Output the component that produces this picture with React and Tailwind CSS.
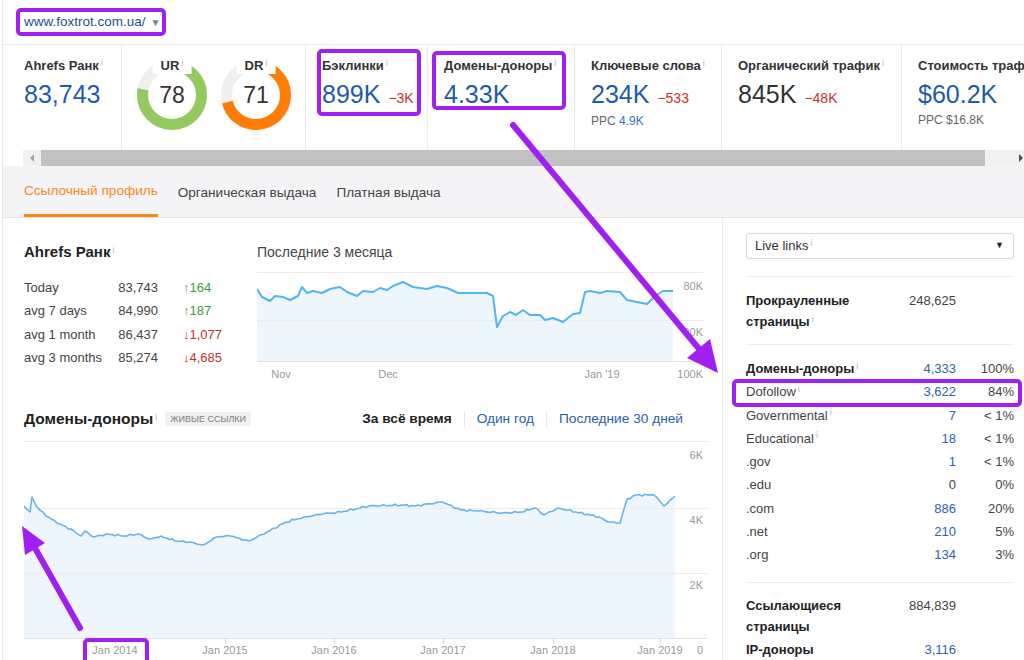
import React from 'react'

const PURPLE = '#a11ff0'

function I() {
  return <sup className="ml-[2px] text-[9px] font-normal text-[#b4b4b4]">i</sup>
}

function Donut({ label, value, pct, color }) {
  const r = 29.5
  const c = 2 * Math.PI * r
  return (
    <div className="relative h-[70px] w-[70px]">
      <svg width="70" height="70" viewBox="0 0 70 70">
        <circle cx="35" cy="35" r={r} fill="none" stroke="#efefef" strokeWidth="11" />
        <circle
          cx="35"
          cy="35"
          r={r}
          fill="none"
          stroke={color}
          strokeWidth="11"
          strokeDasharray={`${pct * c} ${c}`}
          transform="rotate(-90 35 35)"
        />
      </svg>
      <div className="absolute left-1/2 top-[-2px] -translate-x-1/2 whitespace-nowrap bg-white px-2 text-[13px] font-bold leading-4 text-[#333]">
        {label}
        <I />
      </div>
      <div className="absolute inset-0 flex items-center justify-center text-[23px] text-[#333]">{value}</div>
    </div>
  )
}

function Metric({ width, label, value, valueColor = 'text-[#1e5bab]', delta, sub, last }) {
  return (
    <div className={`shrink-0 pl-4 pt-[13px] ${width} ${last ? '' : 'border-r border-[#ececec]'}`}>
      <div className="whitespace-nowrap text-[13px] font-bold leading-4 text-[#333]">
        {label}
        <I />
      </div>
      <div className="mt-[6px] flex items-baseline gap-[8px] whitespace-nowrap">
        <span className={`text-[25px] leading-[28px] ${valueColor}`}>{value}</span>
        {delta && <span className="text-[14px] text-[#c8322b]">{delta}</span>}
      </div>
      {sub && (
        <div className="mt-[4px] whitespace-nowrap text-[12px] leading-4 text-[#666]">
          PPC <span className={sub.blue ? 'text-[#3a6fc0]' : ''}>{sub.v}</span>
        </div>
      )}
    </div>
  )
}

const toPath = (pts) => pts.map((p, i) => `${i ? 'L' : 'M'}${p[0].toFixed(1)},${p[1].toFixed(1)}`).join(' ')

const topPts = [
  [0, 22], [5, 30], [13, 34], [18, 29], [26, 30], [33, 33], [41, 29], [45, 20], [50, 26], [56, 24],
  [65, 26], [73, 22], [83, 20], [90, 25], [100, 29], [106, 24], [116, 25], [123, 21], [130, 23],
  [136, 19], [146, 15], [156, 20], [170, 22], [180, 19], [190, 21], [201, 26], [230, 26], [236, 29],
  [240, 60], [246, 49], [253, 45], [259, 48], [266, 43], [273, 48], [283, 48], [288, 53], [296, 51],
  [306, 55], [316, 47], [323, 46], [328, 25], [333, 24], [343, 26], [350, 24], [363, 25], [370, 33],
  [380, 35], [390, 37], [398, 29], [406, 24], [416, 24],
]

const domKeys = [
  [0, 65], [6, 71], [8, 56], [13, 66], [22, 75], [36, 83], [50, 90], [57, 95], [61, 90], [70, 96],
  [82, 93], [100, 95], [114, 93], [126, 98], [137, 95], [151, 100], [165, 101], [179, 104], [193, 96],
  [206, 95], [225, 100], [243, 91], [262, 81], [280, 76], [299, 73], [317, 71], [345, 65], [377, 64],
  [391, 65], [418, 61], [437, 69], [455, 70], [478, 72], [497, 71], [511, 67], [520, 74], [534, 67],
  [552, 71], [575, 76], [584, 81], [596, 82], [603, 58], [612, 54], [630, 54], [640, 65], [651, 55],
]

function jitter(keys) {
  const out = []
  let n = 0
  for (let k = 0; k < keys.length - 1; k++) {
    const [x0, y0] = keys[k]
    const [x1, y1] = keys[k + 1]
    const steps = Math.max(1, Math.round((x1 - x0) / 3))
    for (let s = 0; s < steps; s++) {
      const t = s / steps
      const noise = s === 0 ? 0 : (Math.sin(n * 1.7) + Math.sin(n * 3.3)) * 0.55
      out.push([x0 + (x1 - x0) * t, y0 + (y1 - y0) * t + noise])
      n++
    }
  }
  out.push(keys[keys.length - 1])
  return out
}

function RankChart() {
  const line = toPath(topPts)
  const fill = `${line} L416,94 L0,94 Z`
  return (
    <svg width="450" height="117" viewBox="0 0 450 117" className="block">
      <path d={fill} fill="#eef6fd" />
      <line x1="0" y1="5.5" x2="446" y2="5.5" stroke="#ececec" />
      <line x1="0" y1="53.5" x2="446" y2="53.5" stroke="#ececec" />
      <line x1="0" y1="94.5" x2="446" y2="94.5" stroke="#e2e2e2" />
      <path d={line} fill="none" stroke="#52b5ef" strokeWidth="2" strokeLinejoin="round" />
      <g fontSize="11" fill="#9a9a9a" fontFamily="Liberation Sans, Arial, sans-serif">
        <text x="446" y="23" textAnchor="end">80K</text>
        <text x="446" y="69" textAnchor="end">90K</text>
        <text x="446" y="111" textAnchor="end">100K</text>
        <text x="24" y="111" textAnchor="middle">Nov</text>
        <text x="131" y="111" textAnchor="middle">Dec</text>
        <text x="345" y="111" textAnchor="middle">Jan '19</text>
      </g>
    </svg>
  )
}

function DomainsChart() {
  const pts = jitter(domKeys)
  const line = toPath(pts)
  const fill = `${line} L651,197 L0,197 Z`
  const ticks = [
    [91, 'Jan 2014'], [201, 'Jan 2015'], [310, 'Jan 2016'], [419, 'Jan 2017'], [529, 'Jan 2018'], [636, 'Jan 2019'],
  ]
  return (
    <svg width="684" height="218" viewBox="0 0 684 218" className="block">
      <path d={fill} fill="#eef6fd" />
      <line x1="0" y1="0.5" x2="684" y2="0.5" stroke="#ececec" />
      <line x1="0" y1="67.5" x2="684" y2="67.5" stroke="#ececec" />
      <line x1="0" y1="132.5" x2="684" y2="132.5" stroke="#ececec" />
      <line x1="0" y1="197.5" x2="684" y2="197.5" stroke="#e2e2e2" />
      {ticks.map(([x]) => (
        <line key={x} x1={x + 0.5} y1="197" x2={x + 0.5} y2="203" stroke="#dcdcdc" />
      ))}
      <path d={line} fill="none" stroke="#6ab2e8" strokeWidth="1.6" strokeLinejoin="round" />
      <g fontSize="11" fill="#9a9a9a" fontFamily="Liberation Sans, Arial, sans-serif">
        <text x="679" y="18" textAnchor="end">6K</text>
        <text x="679" y="83" textAnchor="end">4K</text>
        <text x="679" y="148" textAnchor="end">2K</text>
        <text x="679" y="213" textAnchor="end">0</text>
        {ticks.map(([x, t]) => (
          <text key={t} x={x} y="213" textAnchor="middle">{t}</text>
        ))}
      </g>
    </svg>
  )
}

const rankRows = [
  ['Today', '83,743', '↑164', true],
  ['avg 7 days', '84,990', '↑187', true],
  ['avg 1 month', '86,437', '↓1,077', false],
  ['avg 3 months', '85,274', '↓4,685', false],
]

const domainRows = [
  ['Домены-доноры', '4,333', '100%', { bold: true, info: true }],
  ['Dofollow', '3,622', '84%', { info: true }],
  ['Governmental', '7', '< 1%', { info: true }],
  ['Educational', '18', '< 1%', { info: true }],
  ['.gov', '1', '< 1%', {}],
  ['.edu', '0', '0%', { plain: true }],
  ['.com', '886', '20%', {}],
  ['.net', '210', '5%', {}],
  ['.org', '134', '3%', {}],
]

function Annotations() {
  return (
    <svg className="pointer-events-none absolute inset-0" width="1024" height="660" viewBox="0 0 1024 660">
      <g fill="none" stroke={PURPLE} strokeWidth="4">
        <rect x="18" y="10" width="146" height="24" rx="3" />
        <rect x="319" y="51" width="100" height="63" rx="3" />
        <rect x="434" y="53" width="130" height="55" rx="3" />
        <rect x="734" y="381" width="286" height="24" rx="3" />
        <rect x="85" y="640" width="62" height="26" rx="3" />
      </g>
      <g stroke={PURPLE} strokeWidth="6" strokeLinecap="round">
        <line x1="513" y1="125" x2="700" y2="350" />
        <line x1="80" y1="628" x2="35" y2="548" />
      </g>
      <g fill={PURPLE}>
        <polygon points="718,373 687,358 710,339" />
        <polygon points="22,526 45,543 25,555" />
      </g>
    </svg>
  )
}

export default function App() {
  return (
    <div className="relative h-[660px] w-[1024px] overflow-hidden bg-white font-['Liberation_Sans',Arial,sans-serif] text-[#333]">
      <div className="ml-[2px] flex h-full flex-col border-l border-[#e6e6e6]">
        {/* url bar */}
        <div className="flex h-[45px] shrink-0 items-center border-b border-[#ececec] pl-[21px]">
          <span className="text-[13.5px] text-[#1d4f94]">www.foxtrot.com.ua/</span>
          <span className="ml-[5px] text-[10px] text-[#6b83a8]">▼</span>
        </div>

        {/* metrics */}
        <div className="flex h-[105px] shrink-0 overflow-hidden">
          <div className="w-[119px] shrink-0 border-r border-[#ececec] pl-[21px] pt-[13px]">
            <div className="whitespace-nowrap text-[13px] font-bold leading-4">
              Ahrefs Ранк
              <I />
            </div>
            <div className="mt-[6px] text-[25px] leading-[28px] text-[#1e5bab]">83,743</div>
          </div>
          <div className="flex w-[184px] shrink-0 gap-[14px] border-r border-[#ececec] pl-[15px] pt-[15px]">
            <Donut label="UR" value="78" pct={0.78} color="#93c95e" />
            <Donut label="DR" value="71" pct={0.71} color="#ff7c05" />
          </div>
          <Metric width="w-[122px]" label="Бэклинки" value="899K" delta="−3K" />
          <Metric width="w-[147px]" label="Домены-доноры" value="4.33K" />
          <Metric width="w-[147px]" label="Ключевые слова" value="234K" delta="−533" sub={{ v: '4.9K', blue: true }} />
          <Metric
            width="w-[180px]"
            label="Органический трафик"
            value="845K"
            valueColor="text-[#333]"
            delta="−48K"
          />
          <Metric width="w-[200px]" label="Стоимость трафика" value="$60.2K" sub={{ v: '$16.8K' }} last />
        </div>

        {/* scrollbar */}
        <div className="ml-[20px] flex h-4 shrink-0">
          <div className="flex w-[18px] items-center justify-center bg-[#f1f1f1]">
            <div className="h-0 w-0 border-y-[4px] border-r-[4px] border-y-transparent border-r-[#a3a3a3]" />
          </div>
          <div className="w-[944px] bg-[#c1c1c1]" />
          <div className="flex flex-1 items-center justify-end bg-[#f1f1f1] pr-[1px]">
            <div className="h-0 w-0 border-y-[4px] border-l-[4px] border-y-transparent border-l-[#505050]" />
          </div>
        </div>

        {/* tabs */}
        <div className="flex h-[52px] shrink-0 gap-5 border-b border-[#e6e6e6] bg-[#f4f4f6] pl-[21px] text-[13.6px]">
          <div className="flex items-center border-b-[3px] border-[#f7891b] pt-[3px] text-[#f7891b]">Ссылочный профиль</div>
          <div className="flex items-center pt-[3px] text-[#444]">Органическая выдача</div>
          <div className="flex items-center pt-[3px] text-[#444]">Платная выдача</div>
        </div>

        {/* main */}
        <div className="flex min-h-0 flex-1">
          <div className="w-[719px] shrink-0 pl-[21px] pt-[24px]">
            <div className="flex">
              <div className="w-[233px] shrink-0">
                <div className="text-[15px] font-bold leading-5 text-[#222]">
                  Ahrefs Ранк
                  <I />
                </div>
                <div className="mt-[14px] text-[13px] leading-[23.3px]">
                  {rankRows.map(([l, v, d, up]) => (
                    <div key={l} className="flex">
                      <div className="w-[92px] text-[#444]">{l}</div>
                      <div className="w-[42px] text-right text-[#444]">{v}</div>
                      <div className={`ml-[25px] ${up ? 'text-[#3c9a37]' : 'text-[#c3302a]'}`}>{d}</div>
                    </div>
                  ))}
                </div>
              </div>
              <div>
                <div className="text-[14px] leading-5 text-[#444]">Последние 3 месяца</div>
                <div className="mt-[5px]">
                  <RankChart />
                </div>
              </div>
            </div>

            <div className="mt-[23px] flex h-[24px] w-[659px] items-center">
              <div className="text-[15.5px] font-bold text-[#222]">
                Домены-доноры
                <I />
              </div>
              <span className="ml-[8px] rounded-[2px] bg-[#f0f0f0] px-[5px] py-[1px] text-[9px] uppercase leading-3 text-[#808080]">
                живые ссылки
              </span>
              <div className="ml-auto flex items-center text-[13.7px]">
                <span className="font-bold text-[#222]">За всё время</span>
                <span className="mx-[12px] h-4 w-px bg-[#e6e6e6]" />
                <span className="text-[#2a5db0]">Один год</span>
                <span className="mx-[12px] h-4 w-px bg-[#e6e6e6]" />
                <span className="text-[#2a5db0]">Последние 30 дней</span>
              </div>
            </div>
            <div className="mt-[10px]">
              <DomainsChart />
            </div>
          </div>

          {/* right panel */}
          <div className="flex-1 border-l border-[#ececec] pl-[23px] pr-[10px] pt-[15px] text-[13px]">
            <div className="flex h-[26px] items-center justify-between rounded-[3px] border border-[#d6d6d6] pl-2 pr-[9px]">
              <span className="text-[#333]">
                Live links
                <I />
              </span>
              <span className="text-[9px] text-[#222]">▼</span>
            </div>
            <div className="mt-[17px] border-t border-[#ececec] pb-[12px] pt-[13px]">
              <div className="flex leading-[21px]">
                <div className="w-[130px] font-bold text-[#222]">
                  Прокрауленные страницы
                  <I />
                </div>
                <div className="w-[80px] text-right text-[#444]">248,625</div>
              </div>
            </div>
            <div className="border-y border-[#ececec] pb-[16px] pt-[12px] leading-[23.25px]">
              {domainRows.map(([l, v, p, o]) => (
                <div key={l} className="flex">
                  <div className={`w-[130px] whitespace-nowrap ${o.bold ? 'font-bold text-[#222]' : 'text-[#444]'}`}>
                    {l}
                    {o.info && <I />}
                  </div>
                  <div className={`w-[80px] text-right ${o.plain ? 'text-[#444]' : 'text-[#2f62b0]'}`}>{v}</div>
                  <div className="flex-1 text-right text-[#444]">{p}</div>
                </div>
              ))}
            </div>
            <div className="pt-[12px] leading-[21px]">
              <div className="flex">
                <div className="w-[130px] font-bold text-[#222]">Ссылающиеся страницы</div>
                <div className="w-[80px] text-right text-[#444]">884,839</div>
              </div>
              <div className="mt-[2px] flex">
                <div className="w-[130px] font-bold text-[#222]">IP-доноры</div>
                <div className="w-[80px] text-right text-[#2f62b0]">3,116</div>
              </div>
            </div>
          </div>
        </div>
      </div>
      <Annotations />
    </div>
  )
}
